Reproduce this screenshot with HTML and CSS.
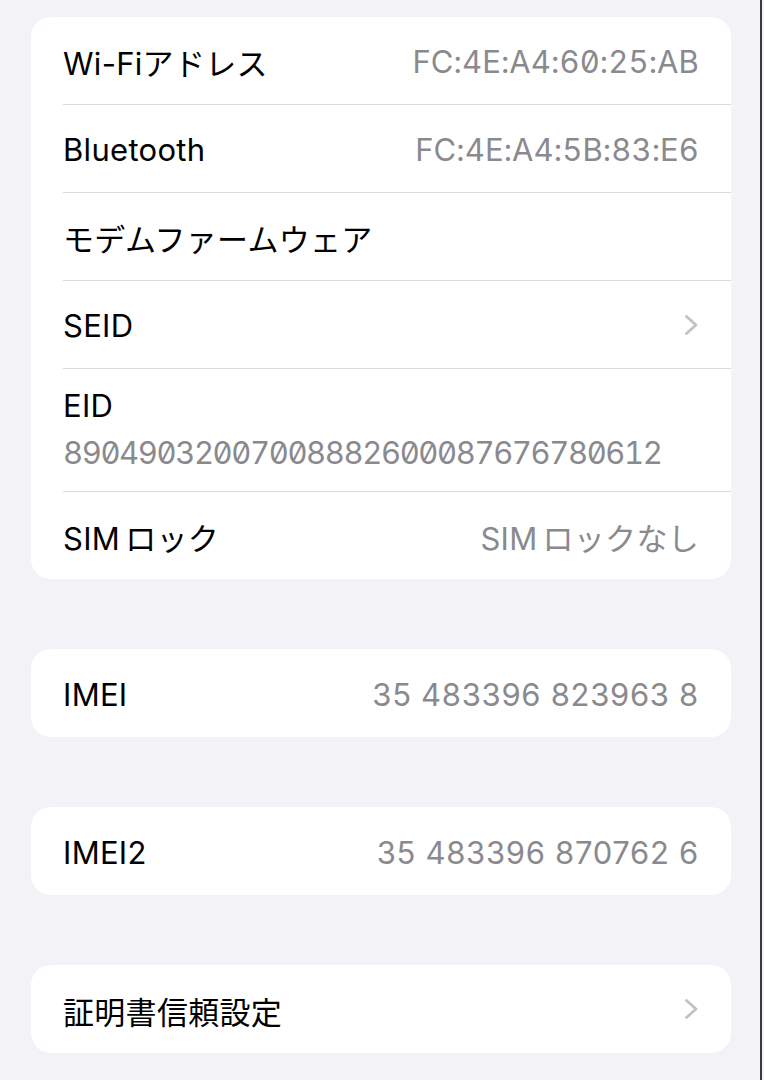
FILE: index.html
```html
<!DOCTYPE html>
<html lang="ja">
<head>
<meta charset="utf-8">
<link rel="stylesheet" href="styles.css">
</head>
<body>
<div class="page">
  <section class="card first">
    <div class="row"><span class="label">Wi-Fiアドレス</span><span class="value mac">FC:4E:A4:60:25:AB</span></div>
    <div class="row"><span class="label">Bluetooth</span><span class="value mac">FC:4E:A4:5B:83:E6</span></div>
    <div class="row"><span class="label">モデムファームウェア</span></div>
    <div class="row"><span class="label">SEID</span>
      <svg class="chev" width="15" height="22" viewBox="0 0 15 22"><polyline points="2.5,2.5 12,11 2.5,19.5" fill="none" stroke="#c2c2c6" stroke-width="2.8" stroke-linecap="round" stroke-linejoin="round"/></svg>
    </div>
    <div class="row tall"><span class="label">EID</span><span class="value eid">89049032007008882600087676780612</span></div>
    <div class="row"><span class="label">SIM<span class="jp-gap">ロック</span></span><span class="value">SIM<span class="jp-gap">ロックなし</span></span></div>
  </section>
  <section class="card">
    <div class="row"><span class="label">IMEI</span><span class="value num">35 483396 823963 8</span></div>
  </section>
  <section class="card">
    <div class="row"><span class="label">IMEI2</span><span class="value num">35 483396 870762 6</span></div>
  </section>
  <section class="card">
    <div class="row"><span class="label">証明書信頼設定</span>
      <svg class="chev" width="15" height="22" viewBox="0 0 15 22"><polyline points="2.5,2.5 12,11 2.5,19.5" fill="none" stroke="#c2c2c6" stroke-width="2.8" stroke-linecap="round" stroke-linejoin="round"/></svg>
    </div>
  </section>
</div>
</body>
</html>
```

FILE: styles.css
```css
html, body {
  margin: 0;
  padding: 0;
  background: #f2f2f7;
}
.page {
  width: 762px;
  min-height: 1080px;
  border-right: 2px solid #3a3a3c;
  padding-top: 17px;
  box-sizing: border-box;
  display: flex;
  flex-direction: column;
  gap: 70px;
  font-family: Inter, "Noto Sans CJK JP", sans-serif;
  font-size: 31px;
  -webkit-font-smoothing: antialiased;
}
.card {
  margin-left: 31px;
  width: 700px;
  background: #ffffff;
  border-radius: 20px;
  overflow: hidden;
}
.row {
  margin-left: 32px;
  padding-right: 32px;
  height: 88px;
  box-sizing: border-box;
  display: flex;
  align-items: center;
  justify-content: space-between;
  padding-top: 2px;
}
.first .row:first-child {
  height: 87px;
}
.row + .row {
  border-top: 1px solid #dcdce0;
}
.label {
  color: #000000;
  letter-spacing: 0.3px;
}
.value {
  color: #8a8a8e;
  letter-spacing: 0.3px;
}
.num {
  letter-spacing: 0.7px;
}
.jp-gap {
  margin-left: 5px;
}
.mac {
  font-feature-settings: "zero" 1, "tnum" 1;
  letter-spacing: 0.1px;
}
.row.tall {
  height: 123px;
  flex-direction: column;
  align-items: flex-start;
  justify-content: flex-start;
  padding-top: 18px;
  gap: 10px;
}
.eid {
  font-feature-settings: "zero" 1, "tnum" 1;
  letter-spacing: -1.4px;
}
.chev {
  display: block;
  margin-top: -2px;
}
```
